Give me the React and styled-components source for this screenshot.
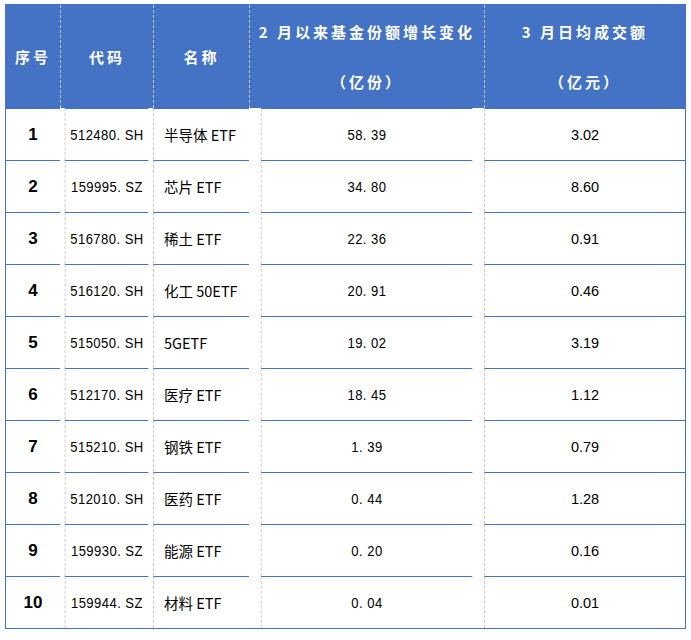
import React from 'react';
import styled, { createGlobalStyle } from 'styled-components';

const Global = createGlobalStyle`
  body { margin: 0; background: #fff; font-family: "Liberation Sans", "Noto Sans CJK SC", sans-serif; }
`;

const rows = [
  ['1', '512480.SH', '半导体 ETF', '58.39', '3.02'],
  ['2', '159995.SZ', '芯片 ETF', '34.80', '8.60'],
  ['3', '516780.SH', '稀土 ETF', '22.36', '0.91'],
  ['4', '516120.SH', '化工 50ETF', '20.91', '0.46'],
  ['5', '515050.SH', '5GETF', '19.02', '3.19'],
  ['6', '512170.SH', '医疗 ETF', '18.45', '1.12'],
  ['7', '515210.SH', '钢铁 ETF', '1.39', '0.79'],
  ['8', '512010.SH', '医药 ETF', '0.44', '1.28'],
  ['9', '159930.SZ', '能源 ETF', '0.20', '0.16'],
  ['10', '159944.SZ', '材料 ETF', '0.04', '0.01'],
];

const Page = styled.div`
  padding: 4px 0 0 5px;
`;

const Table = styled.div`
  width: 681px;
  display: grid;
  grid-template-columns: 54px 93px 96px 235px 1fr;
  border: 1px solid #4472c4;
  box-sizing: border-box;
`;

const Head = styled.div`
  height: 103px;
  background: #4472c4;
  color: #fff;
  font-family: "Noto Sans CJK SC", serif;
  font-weight: 700;
  font-size: 15px;
  letter-spacing: 3px;
  display: flex;
  flex-direction: column;
  align-items: center;
  justify-content: ${p => (p.$two ? 'space-between' : 'center')};
  padding: ${p => (p.$two ? '16px 0 16px' : '0')};
  box-sizing: border-box;
  border-left: ${p => (p.$first ? 'none' : '1px dashed #bcc8dc')};
`;

const Cell = styled.div`
  height: 52px;
  display: flex;
  align-items: center;
  justify-content: ${p => (p.$left ? 'flex-start' : 'center')};
  padding-left: ${p => (p.$left ? '10px' : '0')};
  box-sizing: border-box;
  border-top: 1px solid #4472c4;
  border-left: ${p => (p.$first ? 'none' : '1px dashed #c8c8c8')};
  font-size: ${p => (p.$bold ? '17px' : '14.5px')};
  font-weight: ${p => (p.$bold ? 700 : 400)};
  color: #000;
  font-family: ${p => (p.$cjk ? '"Noto Sans CJK SC", sans-serif' : '"Liberation Sans", sans-serif')};
  letter-spacing: ${p => (p.$wide ? '0.5px' : '0')};
  transform: ${p => (p.$narrow ? 'scaleX(0.9)' : 'none')};
`;

export default function App() {
  return (
    <Page>
      <Global />
      <Table>
        <Head $first>序号</Head>
        <Head>代码</Head>
        <Head>名称</Head>
        <Head $two><span>2 月以来基金份额增长变化</span><span>（亿份）</span></Head>
        <Head $two><span>3 月日均成交额</span><span>（亿元）</span></Head>
        {rows.map(r => (
          <React.Fragment key={r[0]}>
            <Cell $first $bold>{r[0]}</Cell>
            <Cell $wide $narrow>{r[1].replace('.', '. ')}</Cell>
            <Cell $left $cjk>{r[2]}</Cell>
            <Cell $wide $narrow>{r[3].replace('.', '. ')}</Cell>
            <Cell>{r[4]}</Cell>
          </React.Fragment>
        ))}
      </Table>
    </Page>
  );
}
